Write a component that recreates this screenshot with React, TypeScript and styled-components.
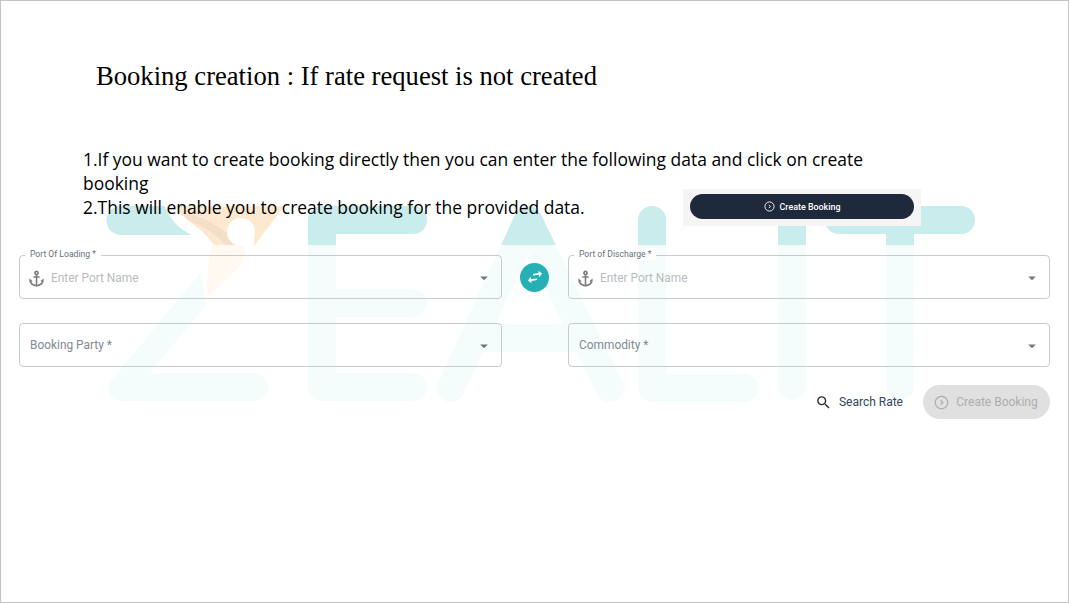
import React from 'react';
import styled, { createGlobalStyle } from 'styled-components';
import { MdAnchor, MdArrowDropDown, MdSearch, MdSwapHoriz } from 'react-icons/md';

const GlobalStyle = createGlobalStyle`
  html, body {
    margin: 0;
    background: #fff;
  }
`;

const Slide = styled.div`
  position: relative;
  box-sizing: border-box;
  width: 1069px;
  height: 603px;
  border: 1px solid #c4c4c4;
  overflow: hidden;
  background: #fff;
`;

const Title = styled.h1`
  margin: 0;
  padding: 58px 0 0 95px;
  font-family: 'Liberation Serif', serif;
  font-size: 26.62px;
  line-height: 34px;
  font-weight: 400;
  color: #000;
`;

const Steps = styled.div`
  position: relative;
  z-index: 1;
  width: 800px;
  margin: 54px 0 0 82px;
  font-family: 'Open Sans', sans-serif;
  font-size: 17.47px;
  line-height: 24px;
  color: #000;
`;

const Watermark = styled.svg`
  position: absolute;
  left: 0;
  top: 0;
`;

const ShotPill = styled.div`
  position: absolute;
  left: 682px;
  top: 188px;
  box-sizing: border-box;
  width: 238px;
  height: 37px;
  padding-top: 5px;
  display: flex;
  align-items: flex-start;
  justify-content: center;
  background: #f5f5f5;
`;

const DarkButton = styled.div`
  width: 224px;
  height: 25px;
  border-radius: 13px;
  background: #1e293b;
  color: #fff;
  display: flex;
  align-items: center;
  justify-content: center;
  gap: 5px;
  font-family: Roboto, sans-serif;
  font-size: 8.9px;
  font-weight: 500;
`;

const Form = styled.div`
  position: relative;
  display: grid;
  grid-template-columns: 483px 66px 482px;
  grid-auto-rows: 44px;
  row-gap: 24px;
  margin: 36px 0 0 18px;
  width: 1031px;
  font-family: Roboto, sans-serif;
`;

const Field = styled.div`
  position: relative;
  box-sizing: border-box;
  display: flex;
  align-items: center;
  padding: 2px 8px 0 7px;
  border: 1px solid #c8cbce;
  border-radius: 4px;
`;

const FloatLabel = styled.span`
  position: absolute;
  left: 5px;
  top: -8px;
  padding: 0 5px;
  background: #fff;
  font-size: 8.6px;
  line-height: 12px;
  color: #64717c;
`;

const AnchorIcon = styled(MdAnchor)`
  flex: none;
  width: 19px;
  height: 19px;
  color: #7d7d7d;
`;

const Placeholder = styled.span<{ $inset?: boolean }>`
  flex: 1;
  margin-top: ${(p) => (p.$inset ? '0' : '-2px')};
  padding-left: ${(p) => (p.$inset ? '5px' : '3px')};
  font-size: 11.9px;
  color: ${(p) => (p.$inset ? '#b8bcc0' : '#808a93')};
`;

const Caret = styled(MdArrowDropDown)`
  flex: none;
  width: 18px;
  height: 18px;
  color: #757575;
`;

const SwapCell = styled.div`
  display: flex;
  align-items: center;
  justify-content: center;
  padding-right: 1px;
`;

const SwapButton = styled.div`
  width: 29px;
  height: 29px;
  border-radius: 50%;
  background: #26b0b5;
  color: #fff;
  display: flex;
  align-items: center;
  justify-content: center;
`;

const SwapIcon = styled(MdSwapHoriz)`
  width: 20px;
  height: 20px;
  transform: rotate(-8deg);
`;

const Actions = styled.div`
  position: relative;
  display: flex;
  justify-content: flex-end;
  align-items: center;
  gap: 20px;
  width: 1031px;
  margin: 18px 0 0 18px;
  font-family: Roboto, sans-serif;
  font-size: 12px;
`;

const SearchLink = styled.div`
  display: flex;
  align-items: center;
  gap: 7px;
  color: #33475b;
  svg {
    color: #2b2f38;
  }
`;

const DisabledButton = styled.div`
  box-sizing: border-box;
  width: 127px;
  height: 34px;
  border-radius: 17px;
  background: #e0e0e0;
  color: #adadad;
  display: flex;
  align-items: center;
  justify-content: center;
  gap: 7px;
  padding-right: 1px;
`;

const CircleChevron = ({ size }: { size: number }) => (
  <svg width={size} height={size} viewBox="0 0 24 24" fill="none" stroke="currentColor" strokeWidth="2">
    <circle cx="12" cy="12" r="10" />
    <path d="M10.5 8.5l3.5 3.5-3.5 3.5" />
  </svg>
);

const Logo = () => (
  <Watermark width="1067" height="601" viewBox="1 1 1067 601">
    <defs>
      <clipPath id="upper"><rect x="0" y="0" width="1069" height="245" /></clipPath>
      <clipPath id="lower"><rect x="0" y="245" width="1069" height="358" /></clipPath>
      <g id="letters" fill="none" strokeWidth="28" strokeLinecap="round" strokeLinejoin="round">
        <path d="M322 220H413M322 220V387H413M322 303H413" />
        <path d="M451 388L528 220L610 388M480 338H578" />
        <path d="M652 220V388H744" />
        <path d="M792 220V386" />
        <path d="M839 220H961M900 220V386" />
      </g>
    </defs>
    <g clipPath="url(#upper)"><use href="#letters" stroke="#c9ecec" /></g>
    <g clipPath="url(#lower)"><use href="#letters" stroke="#f5fcfc" /></g>
    <path d="M121 206H165Q172 226 192 235H121A14.5 14.5 0 0 1 121 206Z" fill="#c9ecec" />
    <path d="M201 272L109 383A14 14 0 0 0 120 401H254A14 14 0 0 0 254 373H150L206 305Z" fill="#f5fcfc" />
    <path d="M175 206H284L255 245H214Q205 232 190 222Q180 215 175 206Z" fill="#fde9d0" />
    <path d="M180 212Q215 218 240 245H226Q212 230 188 220Z" fill="#f4dfc8" />
    <path d="M213 245H244Q247 256 238 268Q222 285 207 297Q205 270 213 245Z" fill="#fff9f2" />
    <circle cx="241" cy="232" r="14" fill="#fff" />
    <path d="M227 236L244 245H254V232H232Z" fill="#fff" />
  </Watermark>
);

const App: React.FC = () => {
  return (
    <>
      <GlobalStyle />
      <Slide>
        <Logo />
        <Title>Booking creation : If rate request is not created</Title>
        <Steps>
          1.If you want to create booking directly then you can enter the following data and click on create booking
          <br />
          2.This will enable you to create booking for the provided data.
        </Steps>
        <ShotPill>
          <DarkButton>
            <CircleChevron size={11} />
            Create Booking
          </DarkButton>
        </ShotPill>
        <Form>
          <Field>
            <FloatLabel>Port Of Loading *</FloatLabel>
            <AnchorIcon />
            <Placeholder $inset>Enter Port Name</Placeholder>
            <Caret />
          </Field>
          <SwapCell>
            <SwapButton>
              <SwapIcon />
            </SwapButton>
          </SwapCell>
          <Field>
            <FloatLabel>Port of Discharge *</FloatLabel>
            <AnchorIcon />
            <Placeholder $inset>Enter Port Name</Placeholder>
            <Caret />
          </Field>
          <Field>
            <Placeholder>Booking Party *</Placeholder>
            <Caret />
          </Field>
          <div />
          <Field>
            <Placeholder>Commodity *</Placeholder>
            <Caret />
          </Field>
        </Form>
        <Actions>
          <SearchLink>
            <MdSearch size={17} />
            Search Rate
          </SearchLink>
          <DisabledButton>
            <CircleChevron size={15} />
            Create Booking
          </DisabledButton>
        </Actions>
      </Slide>
    </>
  );
};

export default App;
